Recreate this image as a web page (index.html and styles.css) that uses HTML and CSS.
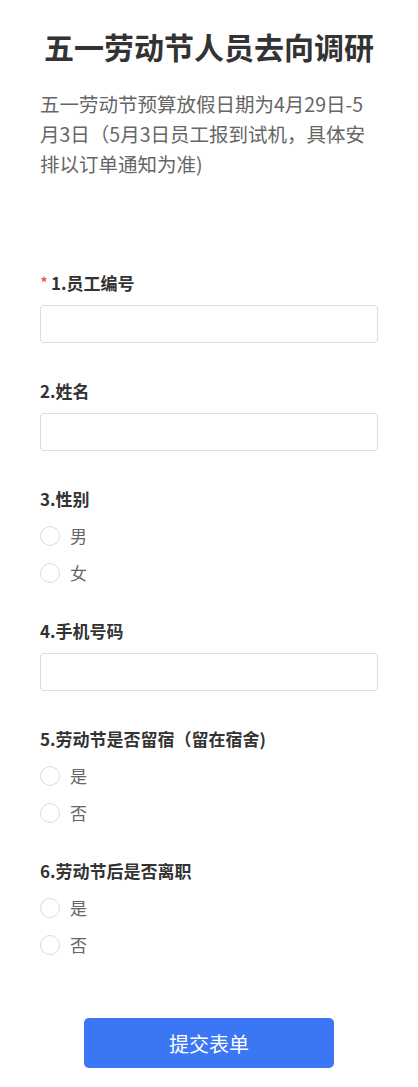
FILE: index.html
```html
<!DOCTYPE html>
<html lang="zh-CN">
<head>
    <meta charset="UTF-8">
    <meta name="viewport" content="width=device-width, initial-scale=1.0">
    <title>五一劳动节人员去向调研</title>
    <link rel="stylesheet" href="styles.css">
</head>
<body>
    <div class="survey">
        <h1 class="title">五一劳动节人员去向调研</h1>
        <p class="desc">五一劳动节预算放假日期为4月29日-5月3日（5月3日员工报到试机，具体安排以订单通知为准)</p>

        <form class="form">
            <div class="question">
                <div class="label"><span class="req">*</span>1.员工编号</div>
                <input type="text" class="text-input">
            </div>
            <div class="question">
                <div class="label">2.姓名</div>
                <input type="text" class="text-input">
            </div>
            <div class="question choice">
                <div class="label">3.性别</div>
                <label class="option"><input type="radio" name="q3"><span class="dot"></span>男</label>
                <label class="option"><input type="radio" name="q3"><span class="dot"></span>女</label>
            </div>
            <div class="question">
                <div class="label">4.手机号码</div>
                <input type="text" class="text-input">
            </div>
            <div class="question choice">
                <div class="label">5.劳动节是否留宿（留在宿舍)</div>
                <label class="option"><input type="radio" name="q5"><span class="dot"></span>是</label>
                <label class="option"><input type="radio" name="q5"><span class="dot"></span>否</label>
            </div>
            <div class="question choice">
                <div class="label">6.劳动节后是否离职</div>
                <label class="option"><input type="radio" name="q6"><span class="dot"></span>是</label>
                <label class="option"><input type="radio" name="q6"><span class="dot"></span>否</label>
            </div>
            <div class="actions">
                <button type="button" class="submit">提交表单</button>
            </div>
        </form>
    </div>
</body>
</html>
```

FILE: styles.css
```css
:root {
    --text: #333;
    --muted: #666;
    --line: #dcdcdc;
    --primary: #3b76f4;
    --danger: #f5474b;
}
body { margin: 0; background: #fff; font-family: "Noto Sans CJK SC", "Noto Sans", sans-serif; color: var(--text); }
.survey { padding: 26px 40px 20px; }
.title { margin: 0; font-size: 30px; line-height: 40px; font-weight: bold; text-align: center; color: #333; }
.desc { margin: 23px 0 0; font-size: 19.5px; line-height: 30px; color: var(--muted); }
.form { margin-top: 93px; }
.question { padding-bottom: 37px; }
.question.choice { padding-bottom: 29px; }
.label { font-size: 17px; line-height: 22px; font-weight: bold; color: var(--text); }
.req { color: var(--danger); font-weight: normal; margin-right: 3px; }
.text-input { display: block; box-sizing: border-box; width: 100%; height: 38px; margin-top: 11px; border: 1px solid var(--line); border-radius: 4px; padding: 0 10px; font-size: 16px; outline: none; }
.choice .label { margin-bottom: 7px; }
.option { display: flex; align-items: center; height: 37px; font-size: 17px; color: var(--muted); cursor: pointer; }
.option input { display: none; }
.dot { width: 18px; height: 18px; border: 1px solid var(--line); border-radius: 50%; margin-right: 10px; }
.option input:checked + .dot { border: 5px solid var(--primary); width: 10px; height: 10px; }
.actions { display: flex; justify-content: center; padding-top: 26px; }
.submit { width: 250px; height: 50px; border: none; border-radius: 5px; background: var(--primary); color: #fff; font-size: 20px; font-family: inherit; cursor: pointer; }
```
